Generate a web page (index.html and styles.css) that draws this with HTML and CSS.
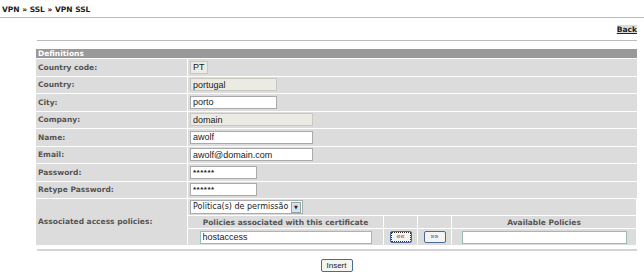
FILE: index.html
```html
<!DOCTYPE html>
<html lang="en">
<head>
    <meta charset="UTF-8">
    <title>VPN SSL</title>
    <link rel="stylesheet" href="styles.css">
</head>
<body>
    <div class="breadcrumb">VPN &raquo; SSL &raquo; VPN SSL</div>
    <div class="content">
        <div class="back-row"><a href="#" class="back">Back</a></div>
        <hr class="thin">
        <table class="form-table">
            <tr><th colspan="2" class="caption">Definitions</th></tr>
            <tr>
                <td class="label">Country code:</td>
                <td class="value"><input type="text" class="ro w-cc" value="PT" readonly></td>
            </tr>
            <tr>
                <td class="label">Country:</td>
                <td class="value"><input type="text" class="ro w-md" value="portugal" readonly></td>
            </tr>
            <tr>
                <td class="label">City:</td>
                <td class="value"><input type="text" class="w-md" value="porto"></td>
            </tr>
            <tr>
                <td class="label">Company:</td>
                <td class="value"><input type="text" class="ro w-lg" value="domain" readonly></td>
            </tr>
            <tr>
                <td class="label">Name:</td>
                <td class="value"><input type="text" class="w-lg" value="awolf"></td>
            </tr>
            <tr>
                <td class="label">Email:</td>
                <td class="value"><input type="text" class="w-lg" value="awolf@domain.com"></td>
            </tr>
            <tr>
                <td class="label">Password:</td>
                <td class="value"><input type="text" class="pw w-sm" value="******"></td>
            </tr>
            <tr>
                <td class="label">Retype Password:</td>
                <td class="value"><input type="text" class="pw w-sm" value="******"></td>
            </tr>
            <tr>
                <td class="label">Associated access policies:</td>
                <td class="nested">
                    <table class="policy-table">
                        <tr>
                            <td colspan="4" class="pick">
                                <span class="select">Politica(s) de permiss&atilde;o <span class="arrow">&#9660;</span></span>
                            </td>
                        </tr>
                        <tr>
                            <th class="col-assoc">Policies associated with this certificate</th>
                            <th class="col-btn"></th>
                            <th class="col-btn"></th>
                            <th class="col-avail">Available Policies</th>
                        </tr>
                        <tr>
                            <td class="centered"><input type="text" class="list" value="hostaccess"></td>
                            <td class="centered"><button class="small focused">&laquo;&laquo;</button></td>
                            <td class="centered"><button class="small">&raquo;&raquo;</button></td>
                            <td class="centered"><input type="text" class="list" value=""></td>
                        </tr>
                    </table>
                </td>
            </tr>
        </table>
        <hr class="thick">
        <div class="actions"><button class="insert">Insert</button></div>
    </div>
</body>
</html>
```

FILE: styles.css
```css
body {
    margin: 0;
    font-family: "DejaVu Sans", Verdana, sans-serif;
    font-size: 7.5px;
    color: #333;
    background-color: white;
}
.breadcrumb {
    font-weight: bold;
    color: #222;
    padding: 5px 2px 3px 2px;
    border-bottom: 1px solid #bbb;
    height: 9px;
}
.content {
    margin: 0 7px 0 36px;
}
.back-row {
    text-align: right;
    padding-top: 7px;
    height: 12px;
}
.back {
    color: #222;
    font-weight: bold;
    text-decoration: underline;
    background-color: #ddd;
}
hr.thin {
    border: none;
    border-top: 1px solid #bbb;
    margin: 3px 0 8px 1px;
}
hr.thick {
    border: none;
    height: 2px;
    background-color: #d4d4d4;
    margin: 3px 0 8px 1px;
}
.form-table {
    width: 100%;
    border-collapse: collapse;
}
.form-table td, .form-table th {
    padding: 0;
}
.caption {
    background-color: #999;
    color: white;
    font-weight: bold;
    text-align: left;
    height: 9px;
    padding: 0 0 0 2px !important;
    border-bottom: 1px solid white;
}
.label {
    background-color: #dcdcdc;
    color: #555;
    font-weight: bold;
    width: 149px;
    height: 16.5px;
    padding-left: 2px !important;
    border-bottom: 1px solid white;
    border-right: 1px solid white;
}
.value {
    background-color: #dcdcdc;
    border-bottom: 1px solid white;
    padding-left: 2px !important;
    height: 16.5px;
}
input {
    font-family: "Liberation Sans", Arial, sans-serif;
    font-size: 9px;
    height: 13px;
    box-sizing: border-box;
    border: 1px solid #aaa;
    padding: 0 2px;
    margin: 0;
    background-color: white;
    color: #222;
    vertical-align: middle;
}
input.ro {
    background-color: #ebebe4;
    border-color: #c8c8c0;
}
input.pw {
    font-weight: bold;
    font-size: 8px;
    letter-spacing: 0.5px;
}
.w-cc { width: 18px; }
.w-md { width: 87px; }
.w-lg { width: 123px; }
.w-sm { width: 67px; }
.nested {
    background-color: #dcdcdc;
}
.policy-table {
    width: 100%;
    border-collapse: collapse;
}
.policy-table td, .policy-table th {
    padding: 0;
    border-right: 1px solid white;
}
.policy-table tr + tr td, .policy-table tr + tr th {
    border-top: 1px solid white;
}
.pick {
    height: 16px;
    padding-left: 2px !important;
}
.select {
    display: inline-block;
    font-family: "DejaVu Sans", Verdana, sans-serif;
    font-size: 8px;
    border: 1px solid #aaa;
    background-color: white;
    padding: 0 1px 0 2px;
    height: 12px;
    line-height: 12px;
    color: #222;
}
.arrow {
    display: inline-block;
    font-size: 5px;
    width: 8px;
    height: 9px;
    line-height: 9px;
    text-align: center;
    border: 1px solid #8aa;
    background-color: #dde;
    vertical-align: top;
    margin-top: 1px;
}
.policy-table th {
    color: #555;
    font-weight: bold;
    height: 12px;
}
.col-assoc { width: 195px; }
.col-btn { width: 33px; }
.centered {
    text-align: center;
    height: 16px;
}
input.list {
    width: 172px;
    border-color: #9bb;
}
.policy-table td:last-child input.list {
    width: 165px;
}
button {
    font-family: "Liberation Sans", Arial, sans-serif;
    font-size: 8px;
    background-color: #f4f4f0;
    border: 1px solid #4a6a9a;
    border-radius: 2px;
    color: #222;
    padding: 0;
    cursor: pointer;
}
button.small {
    width: 22px;
    height: 12px;
    line-height: 10px;
    font-size: 7px;
    color: #446;
}
button.focused {
    outline: 1px dotted #333;
    outline-offset: -2px;
}
.actions {
    text-align: center;
}
.insert {
    width: 32px;
    height: 13px;
}
```
